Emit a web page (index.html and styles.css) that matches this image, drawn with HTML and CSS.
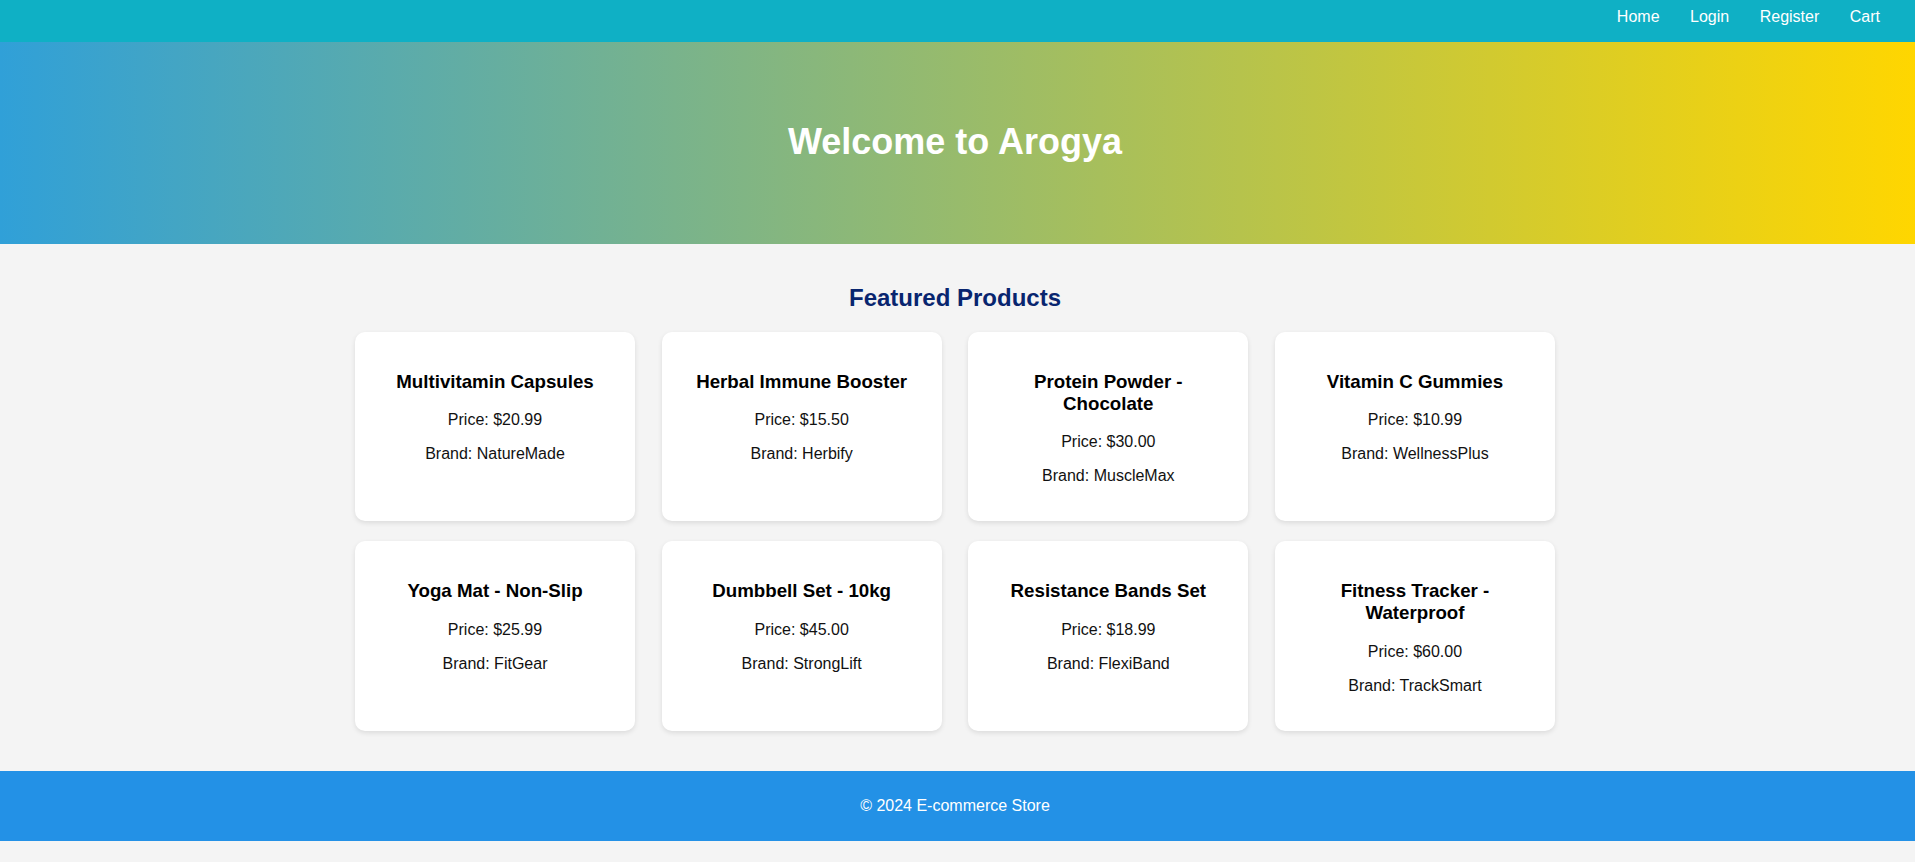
FILE: index.html
```html
<!DOCTYPE html>
<html lang="en">
<head>
<meta charset="utf-8">
<title>Arogya</title>
<link rel="stylesheet" href="styles.css">
</head>
<body>
<header class="navbar">
  <nav class="nav-links">
    <a href="#">Home</a>
    <a href="#">Login</a>
    <a href="#">Register</a>
    <a href="#">Cart</a>
  </nav>
</header>
<section class="hero">
  <h1>Welcome to Arogya</h1>
</section>
<main class="featured">
  <h2>Featured Products</h2>
  <div class="product-grid">
    <div class="card"><h3>Multivitamin Capsules</h3><p>Price: $20.99</p><p>Brand: NatureMade</p></div>
    <div class="card"><h3>Herbal Immune Booster</h3><p>Price: $15.50</p><p>Brand: Herbify</p></div>
    <div class="card"><h3>Protein Powder - Chocolate</h3><p>Price: $30.00</p><p>Brand: MuscleMax</p></div>
    <div class="card"><h3>Vitamin C Gummies</h3><p>Price: $10.99</p><p>Brand: WellnessPlus</p></div>
    <div class="card"><h3>Yoga Mat - Non-Slip</h3><p>Price: $25.99</p><p>Brand: FitGear</p></div>
    <div class="card"><h3>Dumbbell Set - 10kg</h3><p>Price: $45.00</p><p>Brand: StrongLift</p></div>
    <div class="card"><h3>Resistance Bands Set</h3><p>Price: $18.99</p><p>Brand: FlexiBand</p></div>
    <div class="card"><h3>Fitness Tracker - Waterproof</h3><p>Price: $60.00</p><p>Brand: TrackSmart</p></div>
  </div>
</main>
<footer class="footer">
  <p>&copy; 2024 E-commerce Store</p>
</footer>
</body>
</html>
```
FILE: styles.css
```css
html {
  background: #f4f4f4;
}
body {
  margin: 0;
  background: #f4f4f4;
  font-family: "Liberation Sans", Arial, sans-serif;
  color: #000;
}
.navbar {
  background: #0fb0c5;
  height: 42px;
  box-sizing: border-box;
  padding: 8px 35px 0 0;
  display: flex;
  justify-content: flex-end;
}
.nav-links {
  display: flex;
  gap: 30.5px;
}
.nav-links a {
  color: #fff;
  text-decoration: none;
  font-size: 16px;
  line-height: 18.4px;
}
.hero {
  background: linear-gradient(to right, #30a0d8, #ffd600);
  padding: 79px 25px 82px 20px;
  text-align: center;
}
.hero h1 {
  margin: 0;
  color: #fff;
  font-size: 36px;
  line-height: 41px;
  font-weight: bold;
}
.featured {
  padding: 20px 5px 20px 0;
  text-align: center;
}
.featured h2 {
  color: #08256f;
  font-size: 24px;
  margin: 19.92px 0;
}
.product-grid {
  width: 1200px;
  margin: 0 auto;
  display: grid;
  grid-template-columns: repeat(4, 280px);
  justify-content: space-between;
  row-gap: 20px;
}
.card {
  background: #fff;
  border-radius: 10px;
  box-shadow: 0 2px 5px rgba(0, 0, 0, 0.1);
  padding: 20px;
  box-sizing: border-box;
  text-align: center;
}
.card h3 {
  font-size: 18.72px;
  margin: 18.72px 0;
  color: #000;
}
.card p {
  font-size: 16px;
  margin: 16px 0;
  color: #111;
}
.footer {
  margin-top: 20px;
  background: #2391e6;
  color: #fff;
  text-align: center;
  padding: 10px 5px 10px 0;
}
.footer p {
  margin: 16px 0;
  font-size: 16px;
}
```
